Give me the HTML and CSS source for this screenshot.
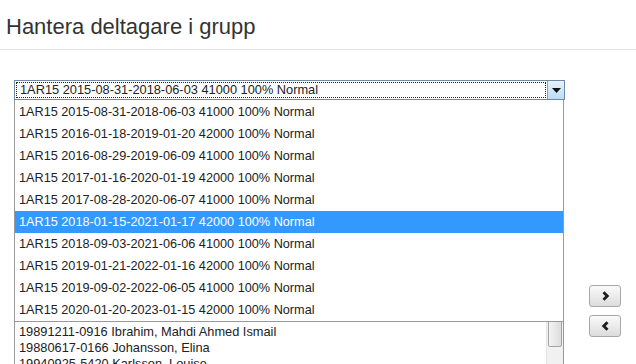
FILE: index.html
```html
<!DOCTYPE html>
<html lang="sv">
<head>
  <meta charset="UTF-8">
  <title>Hantera deltagare i grupp</title>
  <link rel="stylesheet" href="styles.css">
</head>
<body>

  <header class="page-head">
    <h1>Hantera deltagare i grupp</h1>
  </header>

  <main class="content">
    <div class="combo">
      <div class="combo-field">
        <span class="combo-text">1AR15 2015-08-31-2018-06-03 41000 100% Normal</span>
        <span class="combo-btn">
          <svg width="9" height="5" viewBox="0 0 9 5"><path d="M0 0h9L4.5 5z" fill="#111"/></svg>
        </span>
      </div>
      <ul class="combo-list">
        <li>1AR15 2015-08-31-2018-06-03 41000 100% Normal</li>
        <li>1AR15 2016-01-18-2019-01-20 42000 100% Normal</li>
        <li>1AR15 2016-08-29-2019-06-09 41000 100% Normal</li>
        <li>1AR15 2017-01-16-2020-01-19 42000 100% Normal</li>
        <li>1AR15 2017-08-28-2020-06-07 41000 100% Normal</li>
        <li class="selected">1AR15 2018-01-15-2021-01-17 42000 100% Normal</li>
        <li>1AR15 2018-09-03-2021-06-06 41000 100% Normal</li>
        <li>1AR15 2019-01-21-2022-01-16 42000 100% Normal</li>
        <li>1AR15 2019-09-02-2022-06-05 41000 100% Normal</li>
        <li>1AR15 2020-01-20-2023-01-15 42000 100% Normal</li>
      </ul>
    </div>

    <div class="members">
      <div class="listbox">
        <!-- rows scrolled so the first visible one sits just under the open dropdown -->
        <ul class="listbox-rows">
          <li>19891211-0916 Ibrahim, Mahdi Ahmed Ismail</li>
          <li>19880617-0166 Johansson, Elina</li>
          <li>19940925-5420 Karlsson, Louise</li>
          <li>19920831-3357 Larsson, Filip</li>
          <li>19910412-6641 Lindqvist, Moa</li>
        </ul>
        <div class="scrollbar">
          <div class="thumb"></div>
        </div>
      </div>

      <div class="move-btns">
        <button class="move-btn" title="Lägg till">
          <svg width="9" height="10" viewBox="0 0 9 10"><path d="M2.5 1.2L6.3 5 2.5 8.8" fill="none" stroke="#1e1e1e" stroke-width="2.8"/></svg>
        </button>
        <button class="move-btn" title="Ta bort">
          <svg width="9" height="10" viewBox="0 0 9 10"><path d="M6.5 1.2L2.7 5 6.5 8.8" fill="none" stroke="#1e1e1e" stroke-width="2.8"/></svg>
        </button>
      </div>
    </div>
  </main>

</body>
</html>
```

FILE: styles.css
```css
body {
  margin: 0;
  font-family: "Liberation Sans", Arial, sans-serif;
  color: #222;
  background-color: #fff;
  overflow: hidden;
}

ul {
  list-style: none;
  margin: 0;
  padding: 0;
}

.page-head {
  padding: 14px 6px 9px;
  border-bottom: 1px solid #e5e5e5;
}

.page-head h1 {
  margin: 0;
  font-size: 22px;
  line-height: 26px;
  font-weight: normal;
  color: #333;
}

.content {
  padding: 30px 0 0 14px;
}

/* dropdown */

.combo {
  position: relative;
  width: 551px;
}

.combo-field {
  display: flex;
  height: 20px;
  box-sizing: border-box;
  border: 1px solid #6f8aa6;
  background-color: #fff;
}

.combo-text {
  flex: 1;
  margin: 1px;
  padding-left: 3px;
  border: 1px dotted #222;
  font-size: 12.8px;
  line-height: 14px;
  white-space: nowrap;
}

.combo-btn {
  width: 16px;
  display: flex;
  align-items: center;
  justify-content: center;
  border-left: 1px solid #7ea2c6;
  background: linear-gradient(#e6f2fc, #bcdcf6);
}

.combo-list {
  position: absolute;
  top: 20px;
  left: 0;
  width: 550px;
  box-sizing: border-box;
  padding-top: 1px;
  border: 1px solid #999;
  border-top: 0;
  background-color: #fff;
  z-index: 2;
}

.combo-list li {
  height: 22px;
  line-height: 22px;
  padding-left: 4px;
  font-size: 12.7px;
  white-space: nowrap;
}

.combo-list li.selected {
  background-color: #3399ff;
  color: #fff;
}

/* members list */

.members {
  display: flex;
  align-items: center;
  gap: 25px;
  margin-top: 15px;
}

.listbox {
  position: relative;
  width: 550px;
  height: 392px;
  box-sizing: border-box;
  border: 1px solid #999;
  overflow: hidden;
}

.listbox-rows {
  margin-right: 16px;
  padding-top: 208px;
}

.listbox-rows li {
  height: 16px;
  line-height: 16px;
  padding-left: 4px;
  font-size: 12.8px;
  white-space: nowrap;
}

.scrollbar {
  position: absolute;
  top: 0;
  right: 0;
  bottom: 0;
  width: 16px;
  background-color: #f1f1f1;
  border-left: 1px solid #e4e4e4;
}

.thumb {
  margin: 150px 1px 0;
  height: 79px;
  border: 1px solid #a4a4a4;
  border-radius: 2px;
  background: linear-gradient(90deg, #f4f4f4, #dcdcdc);
}

.move-btns {
  display: flex;
  flex-direction: column;
  gap: 8px;
}

.move-btn {
  width: 32px;
  height: 22px;
  padding: 0;
  display: flex;
  align-items: center;
  justify-content: center;
  border: 1px solid #a8a8a8;
  border-radius: 3px;
  background: linear-gradient(#fafafa, #dcdcdc);
  cursor: pointer;
}
```
